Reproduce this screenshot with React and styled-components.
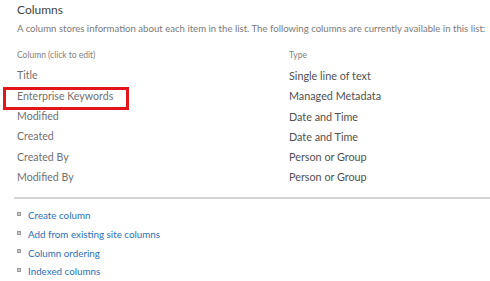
import React from 'react'
import styled, { createGlobalStyle } from 'styled-components'

const GlobalStyle = createGlobalStyle`
  body {
    margin: 0;
    background: #fff;
    font-family: Lato, "Open Sans", sans-serif;
  }
`

const columns = [
  { name: 'Title', type: 'Single line of text' },
  { name: 'Enterprise Keywords', type: 'Managed Metadata', marked: true },
  { name: 'Modified', type: 'Date and Time' },
  { name: 'Created', type: 'Date and Time' },
  { name: 'Created By', type: 'Person or Group' },
  { name: 'Modified By', type: 'Person or Group' },
]

const links = [
  'Create column',
  'Add from existing site columns',
  'Column ordering',
  'Indexed columns',
]

const App = () => {
  return (
    <Page>
      <GlobalStyle />
      <Heading>Columns</Heading>
      <Description>
        A column stores information about each item in the list. The following columns are currently available in this list:
      </Description>

      <Table>
        <HeadCell>Column (click to edit)</HeadCell>
        <HeadCell>Type</HeadCell>
        { columns.map(col =>
          <React.Fragment key={ col.name }>
            <NameCell $marked={ col.marked }>{ col.name }</NameCell>
            <TypeCell>{ col.type }</TypeCell>
          </React.Fragment>
        ) }
      </Table>

      <Separator />

      <LinkList>
        { links.map(link =>
          <LinkItem key={ link }>
            <Bullet />
            <Link href="#">{ link }</Link>
          </LinkItem>
        ) }
      </LinkList>
    </Page>
  )
}

export default App

const Page = styled.div`
  width: 490px;
  height: 281px;
  padding: 2px 0 0 17px;
  box-sizing: border-box;
  overflow: hidden;
`

const Heading = styled.div`
  font-size: 12px;
  color: #444;
  line-height: 16px;
`

const Description = styled.div`
  margin-top: 4px;
  font-size: 9.6px;
  color: #7a7a7a;
  white-space: nowrap;
  line-height: 14px;
`

const Table = styled.div`
  display: grid;
  grid-template-columns: 272px 1fr;
  grid-auto-rows: 20.3px;
  margin-top: 9px;
  align-items: center;
`

const HeadCell = styled.div`
  font-size: 8.5px;
  color: #808080;
`

const NameCell = styled.div`
  position: relative;
  font-size: 10.6px;
  color: #707070;
  ${ p => p.$marked && `
    &::after {
      content: '';
      position: absolute;
      left: -14px;
      top: -3px;
      width: 120px;
      height: 17px;
      border: 3px solid #e2151b;
    }
  ` }
`

const TypeCell = styled.div`
  font-size: 10.8px;
  color: #505050;
`

const Separator = styled.div`
  margin: 10px 0 0 -3px;
  height: 2px;
  background: #d4d4d4;
`

const LinkList = styled.ul`
  list-style: none;
  margin: 7px 0 0;
  padding: 0;
  display: flex;
  flex-direction: column;
`

const LinkItem = styled.li`
  display: flex;
  align-items: center;
  height: 18.7px;
`

const Bullet = styled.span`
  width: 4px;
  height: 4px;
  margin-right: 7px;
  border: 1px solid #999;
  background: #ccc;
  box-sizing: border-box;
  margin-top: -3px;
`

const Link = styled.a`
  font-size: 9.8px;
  color: #2a70b8;
  text-decoration: none;
`
